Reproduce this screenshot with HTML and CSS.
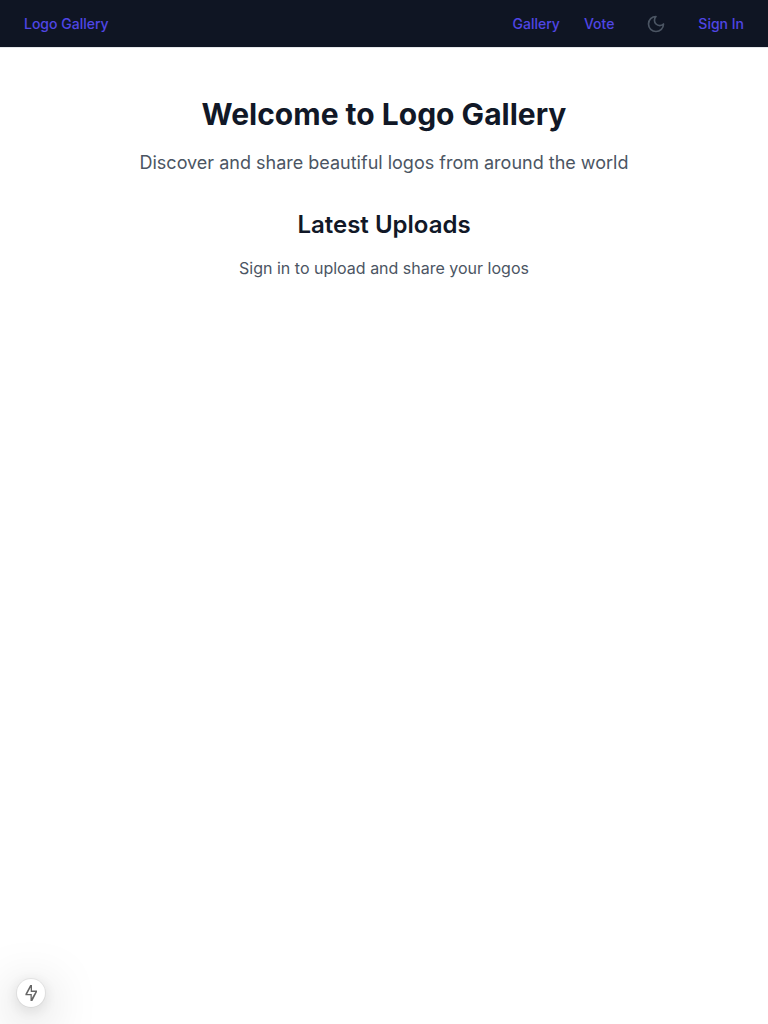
FILE: index.html
```html
<!DOCTYPE html>
<html lang="en">
<head>
<meta charset="utf-8">
<title>Logo Gallery</title>
<link rel="stylesheet" href="styles.css">
</head>
<body>
<nav class="navbar">
  <a class="link" href="#">Logo Gallery</a>
  <div class="menu">
    <a class="link" href="#">Gallery</a>
    <a class="link" href="#">Vote</a>
    <button class="theme" aria-label="Toggle theme">
      <svg width="20" height="20" viewBox="0 0 24 24" fill="none" stroke="currentColor" stroke-width="2" stroke-linecap="round" stroke-linejoin="round"><path d="M12 3a6 6 0 0 0 9 9 9 9 0 1 1-9-9Z"/></svg>
    </button>
    <a class="link" href="#">Sign In</a>
  </div>
</nav>
<main class="main">
  <h1 class="title">Welcome to Logo Gallery</h1>
  <p class="lead">Discover and share beautiful logos from around the world</p>
  <h2 class="subtitle">Latest Uploads</h2>
  <p class="note">Sign in to upload and share your logos</p>
</main>
<div class="indicator">
  <svg width="16" height="16" viewBox="0 0 16 16"><path fill="#666" fill-rule="evenodd" d="M7.200 0H9V5.500H14V7L9.400 16H7.500V10.300H2.400V8.900ZM7.700 2.600 4.200 9H8.800V12.900L12.300 6.900H7.700Z"/></svg>
</div>
</body>
</html>
```
FILE: styles.css
```css
* { box-sizing: border-box; margin: 0; }
body { min-height: 100vh; background: #fff; font-family: Inter, sans-serif; color: #4b5563; line-height: 24px; }
.navbar { display: flex; justify-content: space-between; align-items: center; height: 48px; padding: 0 24px; background: #0f1523; border-bottom: 1px solid #e5e7eb; }
.menu { display: flex; align-items: center; gap: 24px; }
.link { color: #4f46e5; font-size: 14px; line-height: 20px; font-weight: 500; text-decoration: none; }
.theme { display: flex; padding: 8px; border: 0; background: none; color: #4b5563; }
.main { padding: 48px 24px; text-align: center; }
.title { color: #111827; font-size: 30px; line-height: 36px; font-weight: 700; margin-bottom: 17px; }
.lead { font-size: 18px; line-height: 28px; margin-bottom: 32px; }
.subtitle { color: #111827; font-size: 24px; line-height: 32px; font-weight: 600; margin-bottom: 15px; }
.note { font-size: 16px; }
.indicator { position: fixed; left: 17px; bottom: 17px; width: 28px; height: 28px; border-radius: 50%; background: #fff; display: flex; align-items: center; justify-content: center; box-shadow: 0 0 0 1px rgba(0,0,0,.06), 0 3px 16px rgba(0,0,0,.13), 0 11px 50px rgba(0,0,0,.34); }
```
